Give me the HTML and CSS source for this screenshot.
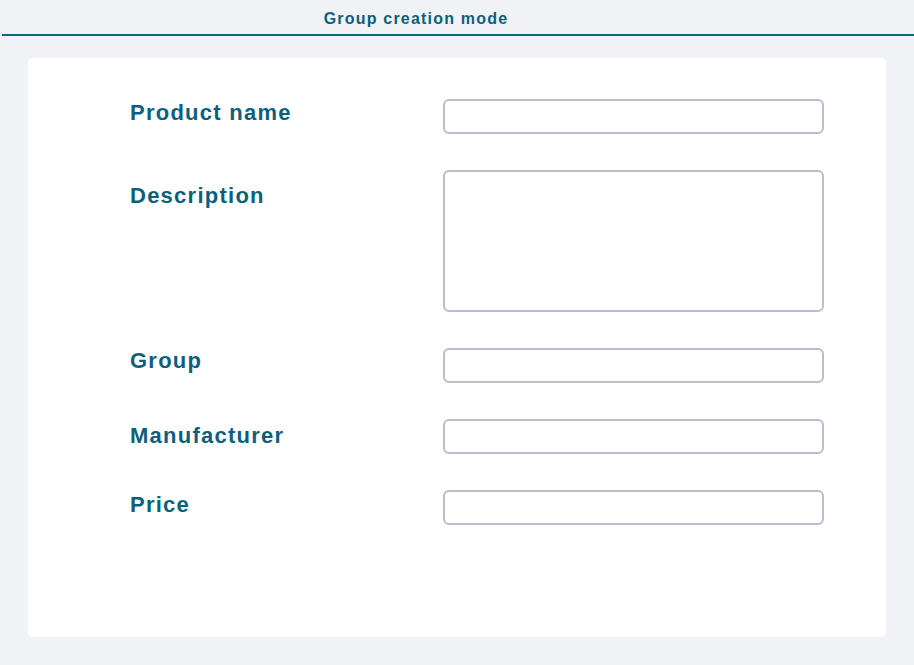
FILE: index.html
```html
<!DOCTYPE html>
<html lang="en">
<head>
<meta charset="utf-8">
<title>Group creation mode</title>
<link rel="stylesheet" href="styles.css">
</head>
<body>
<header class="topbar">
  <h1 class="topbar-title">Group creation mode</h1>
</header>
<main class="card">
  <form class="form">
    <div class="row">
      <label class="label label-name" for="name">Product name</label>
      <input class="field" id="name" type="text">
    </div>
    <div class="row">
      <label class="label label-desc" for="desc">Description</label>
      <textarea class="field field-area" id="desc"></textarea>
    </div>
    <div class="row">
      <label class="label label-group" for="group">Group</label>
      <input class="field" id="group" type="text">
    </div>
    <div class="row">
      <label class="label label-manu" for="manu">Manufacturer</label>
      <input class="field" id="manu" type="text">
    </div>
    <div class="row">
      <label class="label label-price" for="price">Price</label>
      <input class="field" id="price" type="text">
    </div>
  </form>
</main>
</body>
</html>
```
FILE: styles.css
```css
* { box-sizing: border-box; }
html, body {
  margin: 0;
  padding: 0;
  background: #f0f2f5;
  font-family: "Liberation Sans", Arial, sans-serif;
  color: #0d5f7b;
}
.topbar {
  margin-left: 2px;
  height: 36px;
  border-bottom: 2px solid #0e6482;
  padding-right: 84px;
  text-align: center;
}
.topbar-title {
  margin: 0;
  padding-top: 9px;
  font-size: 16px;
  line-height: 20px;
  font-weight: bold;
  letter-spacing: 1.2px;
  color: #0d5f7b;
}
.card {
  margin: 22px 0 0 28px;
  width: 858px;
  height: 579px;
  background: #ffffff;
  border-radius: 5px;
  padding: 41px 0 0 102px;
}
.form {
  display: flex;
  flex-direction: column;
  gap: 36px;
}
.row {
  display: flex;
  align-items: flex-start;
}
.label {
  width: 313px;
  font-size: 22px;
  line-height: 26px;
  font-weight: bold;
  letter-spacing: 1.25px;
  color: #0d5f7b;
  padding-top: 0;
}
.label-name { padding-top: 1px; }
.label-desc { padding-top: 13px; }
.label-group { padding-top: 0; }
.label-manu { padding-top: 4px; }
.label-price { padding-top: 2px; }
.field {
  width: 381px;
  height: 35px;
  border: 2px solid #bcbcd0;
  border-radius: 6px;
  background: #fff;
  margin: 0;
  padding: 4px 8px;
  font: inherit;
  outline: none;
}
.field-area {
  height: 142px;
  resize: none;
}
```
